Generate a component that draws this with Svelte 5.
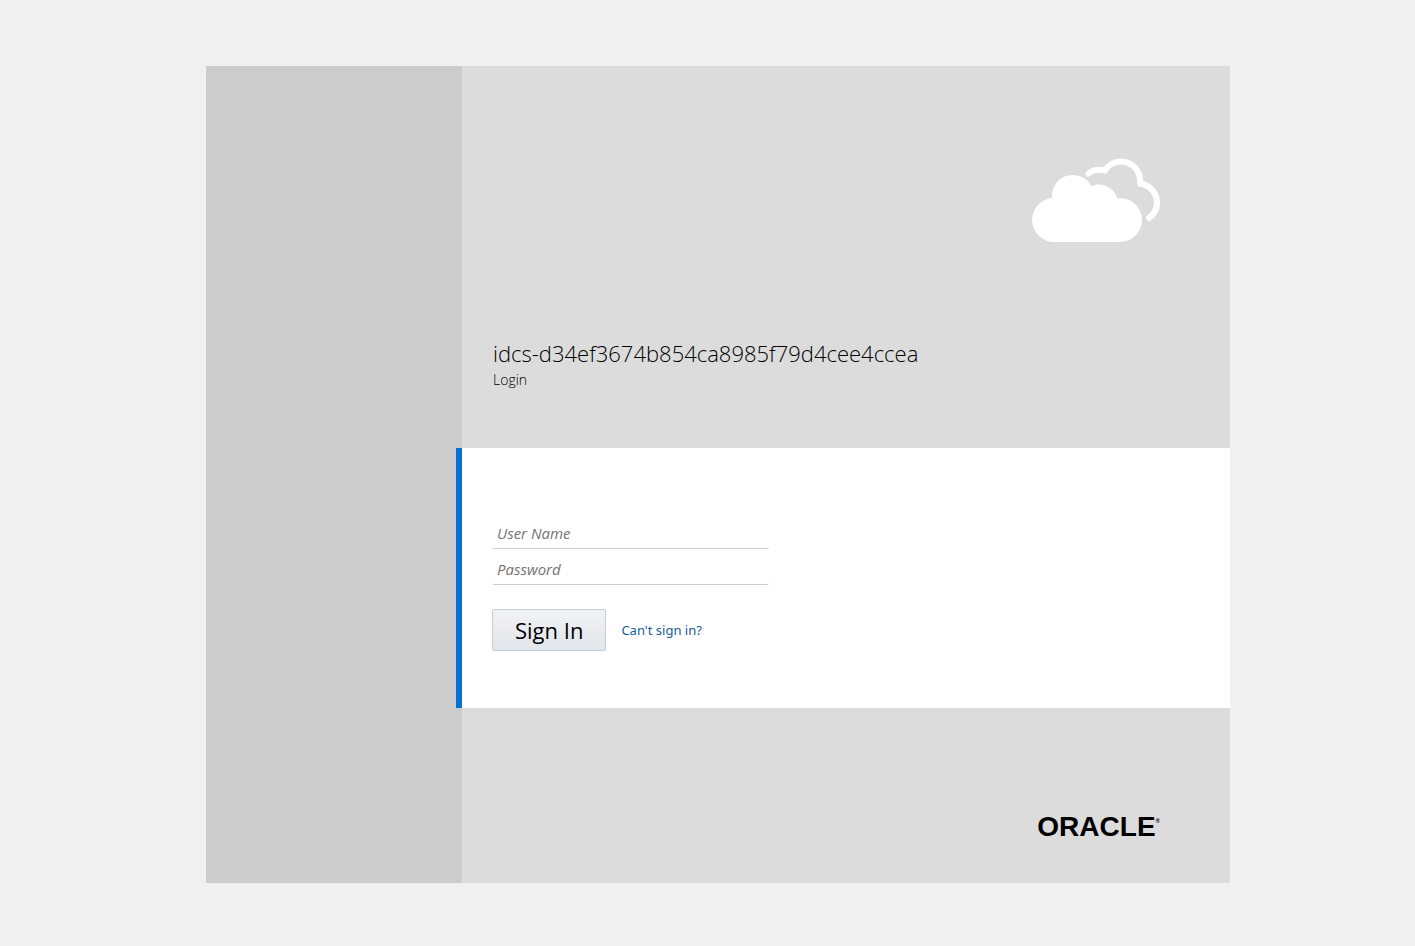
<script>
  let username = $state('');
  let password = $state('');
</script>

<svelte:head><title>Sign In</title></svelte:head>

<main>
  <div class="shell">
    <div class="side"></div>
    <div class="content">
      <header>
        <svg class="cloud" viewBox="0 0 128 84" width="128" height="84" aria-hidden="true">
          <path
            d="M56.500 15.500C60 12.500 66 11 73 12.500A19 19 0 0 1 108 24.500L106 25.500A19 19 0 0 1 117 60"
            fill="none" stroke="#fff" stroke-width="6" stroke-linecap="round" />
          <path
            d="M22 84A22 22 0 0 1 20 40.100V37.500A20.500 20.500 0 0 1 40.500 17A21 21 0 0 1 59.500 28C70 23.500 82 29 85.500 40.500L88 40A22 22 0 0 1 88 84Z"
            fill="#fff" />
        </svg>
        <div class="heading">
          <h1>idcs-d34ef3674b854ca8985f79d4cee4ccea</h1>
          <p>Login</p>
        </div>
      </header>

      <form onsubmit={(e) => e.preventDefault()}>
        <input type="text" aria-label="User Name" placeholder="User Name" bind:value={username} />
        <input type="password" aria-label="Password" placeholder="Password" bind:value={password} />
        <div class="actions">
          <button type="submit">Sign In</button>
          <a href="#help">Can't sign in?</a>
        </div>
      </form>

      <footer>
        <div class="brand">ORACLE<sup>®</sup></div>
      </footer>
    </div>
  </div>
</main>

<style>
  :global(body) {
    background: #f0f0f0;
  }

  main {
    padding: 66px 0 63px 21px;
    font-family: 'Open Sans', 'Noto Sans', sans-serif;
    color: #000;
  }

  .shell {
    display: grid;
    grid-template-columns: 1fr 3fr;
    max-width: 1024px;
    margin: 0 auto;
    background: #dcdcdc;
  }

  .side {
    background: #ccc;
  }

  .content {
    min-width: 0;
  }

  header,
  footer {
    box-sizing: border-box;
    border-left: 1px solid #e2e2e2;
  }

  header {
    display: flex;
    flex-direction: column;
    gap: 95px;
    padding: 92px 70px 57px 30px;
  }

  .cloud {
    align-self: flex-end;
  }

  h1 {
    margin: 0;
    font-size: 22px;
    line-height: 32px;
    font-weight: 300;
  }

  p {
    margin: 0;
    font-size: 14px;
    line-height: 22px;
    font-weight: 300;
  }

  form {
    display: flex;
    flex-direction: column;
    align-items: flex-start;
    gap: 6px;
    margin-left: -6px;
    padding: 71px 30px 57px;
    border-left: 6px solid #0572ce;
    background: #fff;
  }

  input {
    box-sizing: border-box;
    width: 277px;
    max-width: 100%;
    height: 30px;
    padding: 0 5px 2px;
    border: 0;
    border-bottom: 1px solid #c9ced6;
    border-radius: 2px;
    background: transparent;
    font: 15px 'Open Sans', sans-serif;
  }

  input::placeholder {
    color: #737373;
    font-style: italic;
    opacity: 1;
  }

  .actions {
    display: flex;
    align-items: center;
    gap: 15px;
    margin-top: 18px;
  }

  button {
    height: 42px;
    padding: 0 22px;
    border: 1px solid #c4ced7;
    border-radius: 2px;
    background: linear-gradient(#f1f2f4, #e1e6ea);
    color: #000;
    font: 22px 'Open Sans', sans-serif;
  }

  a {
    color: #145c9e;
    font-family: 'Noto Sans', sans-serif;
    font-size: 13px;
    text-decoration: none;
  }

  footer {
    display: flex;
    justify-content: flex-end;
    padding: 103px 70px 40px;
  }

  .brand {
    display: flex;
    font: bold 28px/32px 'Liberation Sans', sans-serif;
  }

  sup {
    font-size: 6px;
    line-height: 20px;
  }
</style>
